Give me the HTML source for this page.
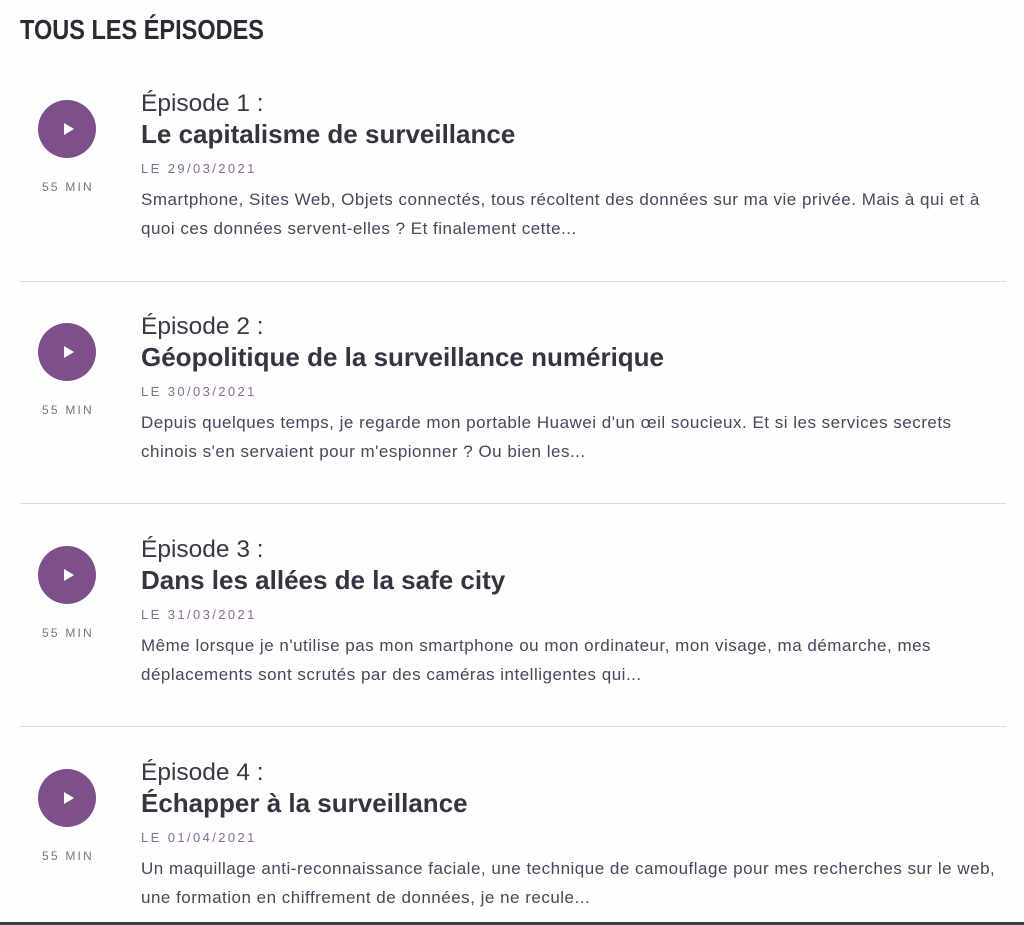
<!DOCTYPE html>
<html><head><meta charset="utf-8"><style>
html,body{margin:0;padding:0;background:#fefefe;}
body{width:1024px;height:925px;position:relative;overflow:hidden;font-family:"Liberation Sans",sans-serif;color:#3a3845;}
h1{position:absolute;left:20px;top:12px;margin:0;font-size:28px;line-height:36px;font-weight:bold;color:#2b2a35;transform:scaleX(0.84);transform-origin:0 0;white-space:nowrap;}
.ep{position:absolute;left:0;width:1024px;height:223px;}
.play{position:absolute;left:38px;top:100px;width:58px;height:58px;border-radius:50%;background:#7d4f8b;}
.play:after{content:"";position:absolute;left:26px;top:23px;border-left:10px solid #fff;border-top:6px solid transparent;border-bottom:6px solid transparent;}
.min{position:absolute;left:18px;width:100px;text-align:center;top:180px;font-size:12px;line-height:14px;letter-spacing:2.2px;color:#7b7280;}
.lab{position:absolute;left:141px;top:89px;font-size:24.5px;line-height:30px;color:#3a3845;white-space:nowrap;}
.tit{position:absolute;left:141px;top:119px;font-size:26px;line-height:30px;font-weight:bold;color:#363440;white-space:nowrap;}
.date{position:absolute;left:141px;top:161px;font-size:13px;line-height:16px;letter-spacing:2.4px;color:#8a6a92;white-space:nowrap;}
.desc{position:absolute;left:141px;top:185px;font-size:17px;line-height:29px;letter-spacing:0.5px;color:#48465a;white-space:nowrap;}
.sep{position:absolute;left:20px;width:986px;height:1px;background:#dcdcdc;top:281px;}
.bot{position:absolute;left:0;top:922px;width:1024px;height:3px;background:#3a3d48;}
</style></head><body>
<h1>TOUS LES ÉPISODES</h1>

<div class="ep" style="top:0">
<div class="play"></div><div class="min">55 MIN</div>
<div class="lab">Épisode 1 :</div>
<div class="tit">Le capitalisme de surveillance</div>
<div class="date">LE 29/03/2021</div>
<div class="desc">Smartphone, Sites Web, Objets connectés, tous récoltent des données sur ma vie privée. Mais à qui et à<br>quoi ces données servent-elles ? Et finalement cette...</div>
<div class="sep"></div>
</div>

<div class="ep" style="top:223px">
<div class="play"></div><div class="min">55 MIN</div>
<div class="lab">Épisode 2 :</div>
<div class="tit">Géopolitique de la surveillance numérique</div>
<div class="date">LE 30/03/2021</div>
<div class="desc">Depuis quelques temps, je regarde mon portable Huawei d'un œil soucieux. Et si les services secrets<br>chinois s'en servaient pour m'espionner ? Ou bien les...</div>
<div class="sep" style="top:280px"></div>
</div>

<div class="ep" style="top:446px">
<div class="play"></div><div class="min">55 MIN</div>
<div class="lab">Épisode 3 :</div>
<div class="tit">Dans les allées de la safe city</div>
<div class="date">LE 31/03/2021</div>
<div class="desc">Même lorsque je n'utilise pas mon smartphone ou mon ordinateur, mon visage, ma démarche, mes<br>déplacements sont scrutés par des caméras intelligentes qui...</div>
<div class="sep" style="top:280px"></div>
</div>

<div class="ep" style="top:669px">
<div class="play"></div><div class="min">55 MIN</div>
<div class="lab">Épisode 4 :</div>
<div class="tit">Échapper à la surveillance</div>
<div class="date">LE 01/04/2021</div>
<div class="desc">Un maquillage anti-reconnaissance faciale, une technique de camouflage pour mes recherches sur le web,<br>une formation en chiffrement de données, je ne recule...</div>
</div>
<div class="bot"></div>
</body></html>
